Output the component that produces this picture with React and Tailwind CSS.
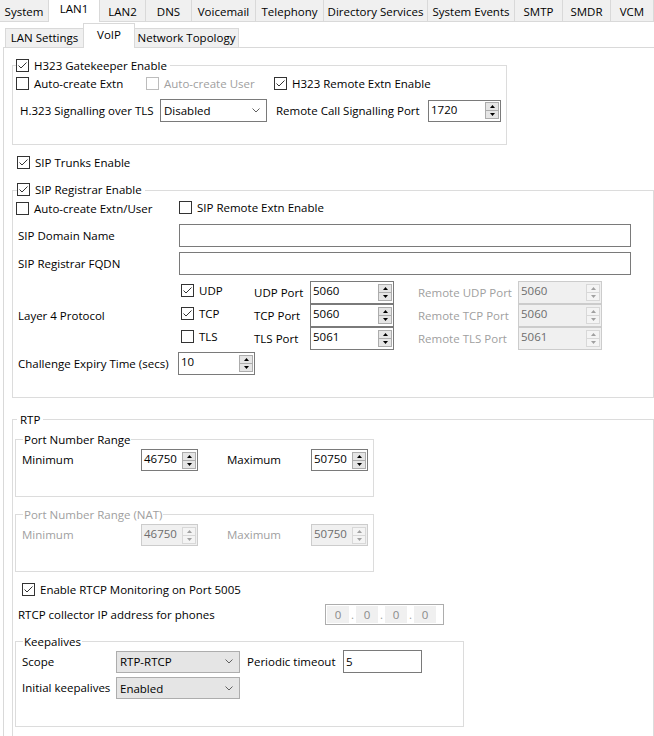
import React from 'react';

// Small WinForms-ish controls

function Check({ checked, disabled }) {
  return (
    <span
      className={`w-[13px] h-[13px] shrink-0 border bg-white flex items-center justify-center ${
        disabled ? 'border-[#bcbcbc]' : 'border-[#333333]'
      }`}
    >
      {checked && (
        <svg width="11" height="11" viewBox="0 0 11 11">
          <path d="M1.5 5.5 L4 8 L9.5 2.5" fill="none" stroke="#333333" strokeWidth="1" />
        </svg>
      )}
    </span>
  );
}

function CheckLabel({ checked, disabled, children, className = '' }) {
  return (
    <div className={`flex items-center gap-[5px] ${className}`}>
      <Check checked={checked} disabled={disabled} />
      <span className={`leading-[13px] whitespace-nowrap ${disabled ? 'text-[#a0a0a0]' : ''}`}>{children}</span>
    </div>
  );
}

function SpinBtn({ up, disabled }) {
  return (
    <div
      className={`w-[14px] h-[9px] border flex items-center justify-center ${
        disabled ? 'border-[#d8d8d8] bg-[#f4f4f4]' : 'border-[#acacac] bg-[#e5e5e5]'
      } ${up ? '' : '-mt-px'}`}
    >
      <svg width="5" height="3" viewBox="0 0 5 3">
        <path d={up ? 'M0 3 L2.5 0 L5 3 Z' : 'M0 0 L2.5 3 L5 0 Z'} fill={disabled ? '#a0a0a0' : '#000'} />
      </svg>
    </div>
  );
}

function Spin({ value, w, h = 'h-[22px]', disabled }) {
  return (
    <div
      className={`${w} ${h} shrink-0 flex border ${
        disabled ? 'border-[#cccccc] bg-[#f0f0f0] text-[#6d6d6d]' : 'border-[#7a7a7a] bg-white'
      }`}
    >
      <span className="flex-1 pl-[2px] pt-[1px] leading-[15px]">{value}</span>
      <div className="flex flex-col justify-center pr-[1px]">
        <SpinBtn up disabled={disabled} />
        <SpinBtn disabled={disabled} />
      </div>
    </div>
  );
}

function Select({ value, w, h = 'h-[23px]', gray }) {
  return (
    <div
      className={`${w} ${h} shrink-0 border flex items-center pl-[3px] pr-[6px] ${
        gray ? 'bg-[#e5e5e5] border-[#adadad]' : 'bg-white border-[#7a7a7a]'
      }`}
    >
      <span className="flex-1 leading-[15px]">{value}</span>
      <svg width="8" height="5" viewBox="0 0 8 5">
        <path d="M0.5 0.5 L4 4 L7.5 0.5" fill="none" stroke="#606060" strokeWidth="1" />
      </svg>
    </div>
  );
}

function TextBox({ value = '', w, h = 'h-[23px]' }) {
  return (
    <div className={`${w} ${h} shrink-0 border border-[#7a7a7a] bg-white flex items-center pl-[2px] leading-[15px]`}>
      {value}
    </div>
  );
}

function Group({ title, titleClass = 'left-[7px] px-[2px]', titleTop = '-top-[8px]', className = '', children }) {
  return (
    <div className={`relative border border-[#dcdcdc] ${className}`}>
      <div className={`absolute ${titleTop} ${titleClass} bg-white leading-[15px] whitespace-nowrap`}>{title}</div>
      {children}
    </div>
  );
}

const TOP_TABS = [
  ['System', 'w-[49px]'],
  ['LAN1', 'w-[51px]', true],
  ['LAN2', 'w-[46px]'],
  ['DNS', 'w-[46px]'],
  ['Voicemail', 'w-[64px]'],
  ['Telephony', 'w-[68px]'],
  ['Directory Services', 'w-[104px]'],
  ['System Events', 'w-[87px]'],
  ['SMTP', 'w-[48px]'],
  ['SMDR', 'w-[48px]'],
  ['VCM', 'w-[43px]'],
];

function PortRow({ name, checked, port, remote }) {
  return (
    <div className="flex items-center h-[23px]">
      <CheckLabel checked={checked} className="w-[73px] shrink-0 ml-[2px] mb-[4px]">
        {name}
      </CheckLabel>
      <span className="w-[56px] shrink-0 whitespace-nowrap">{name} Port</span>
      <Spin value={port} w="w-[84px]" h="h-[23px]" />
      <span className="w-[100px] shrink-0 ml-[24px] whitespace-nowrap text-[#a0a0a0]">Remote {name} Port</span>
      <Spin value={remote} w="w-[84px]" h="h-[23px]" disabled />
    </div>
  );
}

function RangeGroup({ title, disabled, className = '' }) {
  const tone = disabled ? 'text-[#a0a0a0]' : '';
  return (
    <Group title={<span className={tone}>{title}</span>} titleClass="left-[7px] px-[1px]" className={`ml-[2px] w-[359px] h-[58px] ${className}`}>
      <div className="flex items-center mt-[9px] pl-[6px]">
        <span className={`w-[119px] shrink-0 ${tone}`}>Minimum</span>
        <Spin value="46750" w="w-[57px]" disabled={disabled} />
        <span className={`w-[84px] shrink-0 ml-[29px] ${tone}`}>Maximum</span>
        <Spin value="50750" w="w-[57px]" disabled={disabled} />
      </div>
    </Group>
  );
}

export default function App() {
  return (
    <div className="w-[654px] h-[736px] overflow-hidden bg-white text-black text-[11.5px] font-['Open_Sans','Noto_Sans',sans-serif]">
      {/* Main tabs */}
      <div className="flex h-[22px]">
        {TOP_TABS.map(([label, w, active]) =>
          active ? (
            <div key={label} className={`${w} h-[22px] pb-[5px] flex items-center justify-center bg-white border-r border-[#d9d9d9]`}>
              {label}
            </div>
          ) : (
            <div
              key={label}
              className={`${w} h-[22px] pt-[2px] flex items-center justify-center bg-[#f0f0f0] border-r border-b border-[#d9d9d9] whitespace-nowrap`}
            >
              {label}
            </div>
          )
        )}
      </div>

      {/* Sub tabs */}
      <div className="flex items-end h-[25px] pl-[5px]">
        <div className="w-[78px] h-[19px] flex items-center justify-center bg-[#f0f0f0] border-l border-t border-[#d9d9d9] whitespace-nowrap">
          LAN Settings
        </div>
        <div className="relative w-[52px] h-[25px] -mb-px pb-[3px] flex items-center justify-center bg-white border-l border-t border-r border-[#d9d9d9]">
          VoIP
        </div>
        <div className="w-[104px] h-[19px] flex items-center justify-center bg-[#f0f0f0] border-t border-r border-[#d9d9d9] whitespace-nowrap">
          Network Topology
        </div>
      </div>

      {/* VoIP page */}
      <div className="ml-[3px] h-[700px] border-l border-t border-[#d9d9d9]">
        {/* H323 */}
        <Group
          title={<CheckLabel checked>H323 Gatekeeper Enable</CheckLabel>}
          titleClass="left-[3px] pr-[3px]"
          titleTop="-top-[7px]"
          className="ml-[8px] mt-[17px] w-[495px] h-[80px]"
        >
          <div className="flex items-center mt-[11px] pl-[3px]">
            <CheckLabel className="w-[130px] shrink-0">Auto-create Extn</CheckLabel>
            <CheckLabel disabled className="w-[128px] shrink-0">Auto-create User</CheckLabel>
            <CheckLabel checked>H323 Remote Extn Enable</CheckLabel>
          </div>
          <div className="flex items-center mt-[9px] pl-[7px]">
            <span className="w-[140px] shrink-0 whitespace-nowrap">H.323 Signalling over TLS</span>
            <Select value="Disabled" w="w-[107px]" />
            <span className="w-[152px] shrink-0 ml-[9px] whitespace-nowrap">Remote Call Signalling Port</span>
            <Spin value="1720" w="w-[73px]" />
          </div>
        </Group>

        <CheckLabel checked className="ml-[13px] mt-[11px]">SIP Trunks Enable</CheckLabel>

        {/* SIP Registrar */}
        <Group
          title={<CheckLabel checked>SIP Registrar Enable</CheckLabel>}
          titleClass="left-[4px] pr-[3px]"
          className="ml-[8px] mt-[21px] w-[642px] h-[208px]"
        >
          <div className="flex items-center mt-[11px] pl-[3px]">
            <CheckLabel className="w-[163px] shrink-0">Auto-create Extn/User</CheckLabel>
            <CheckLabel className="-mt-[2px]">SIP Remote Extn Enable</CheckLabel>
          </div>
          <div className="flex items-center mt-[9px] pl-[5px]">
            <span className="w-[161px] shrink-0">SIP Domain Name</span>
            <TextBox w="w-[452px]" />
          </div>
          <div className="flex items-center mt-[5px] pl-[5px]">
            <span className="w-[161px] shrink-0">SIP Registrar FQDN</span>
            <TextBox w="w-[452px]" />
          </div>
          <div className="flex items-center mt-[6px] pl-[5px]">
            <span className="w-[161px] shrink-0">Layer 4 Protocol</span>
            <div className="flex flex-col">
              <PortRow name="UDP" checked port="5060" remote="5060" />
              <PortRow name="TCP" checked port="5060" remote="5060" />
              <PortRow name="TLS" port="5061" remote="5061" />
            </div>
          </div>
          <div className="flex items-center mt-[2px] pl-[5px]">
            <span className="w-[160px] shrink-0 whitespace-nowrap">Challenge Expiry Time (secs)</span>
            <Spin value="10" w="w-[77px]" h="h-[23px]" />
          </div>
        </Group>

        {/* RTP */}
        <Group title="RTP" titleClass="left-[4px] px-[3px]" className="ml-[8px] mt-[21px] w-[642px] h-[330px]">
          <RangeGroup title="Port Number Range" className="mt-[19px]" />
          <RangeGroup title="Port Number Range (NAT)" disabled className="mt-[17px]" />

          <CheckLabel checked className="ml-[9px] mt-[11px]">Enable RTCP Monitoring on Port 5005</CheckLabel>

          <div className="flex items-center mt-[8px] pl-[5px]">
            <span className="w-[307px] shrink-0 whitespace-nowrap">RTCP collector IP address for phones</span>
            <div className="w-[119px] h-[21px] border border-[#adadad] bg-white flex items-center px-[1px] text-[#8a8a8a]">
              {[0, 1, 2, 3].map((i) => (
                <React.Fragment key={i}>
                  {i > 0 && <span className="w-[7px] text-center leading-[15px] text-[#a0a0a0]">.</span>}
                  <span className="w-[22px] h-[17px] bg-[#f0f0f0] flex items-center justify-center">0</span>
                </React.Fragment>
              ))}
            </div>
          </div>

          <Group title="Keepalives" titleClass="left-[7px] px-[1px]" className="ml-[2px] mt-[16px] w-[449px] h-[86px]">
            <div className="flex items-center mt-[8px] pl-[6px]">
              <span className="w-[94px] shrink-0">Scope</span>
              <Select value="RTP-RTCP" w="w-[124px]" h="h-[22px]" gray />
              <span className="w-[96px] shrink-0 ml-[7px] whitespace-nowrap">Periodic timeout</span>
              <TextBox value="5" w="w-[79px]" />
            </div>
            <div className="flex items-center mt-[4px] pl-[6px]">
              <span className="w-[94px] shrink-0 whitespace-nowrap">Initial keepalives</span>
              <Select value="Enabled" w="w-[124px]" h="h-[22px]" gray />
            </div>
          </Group>
        </Group>
      </div>
    </div>
  );
}
